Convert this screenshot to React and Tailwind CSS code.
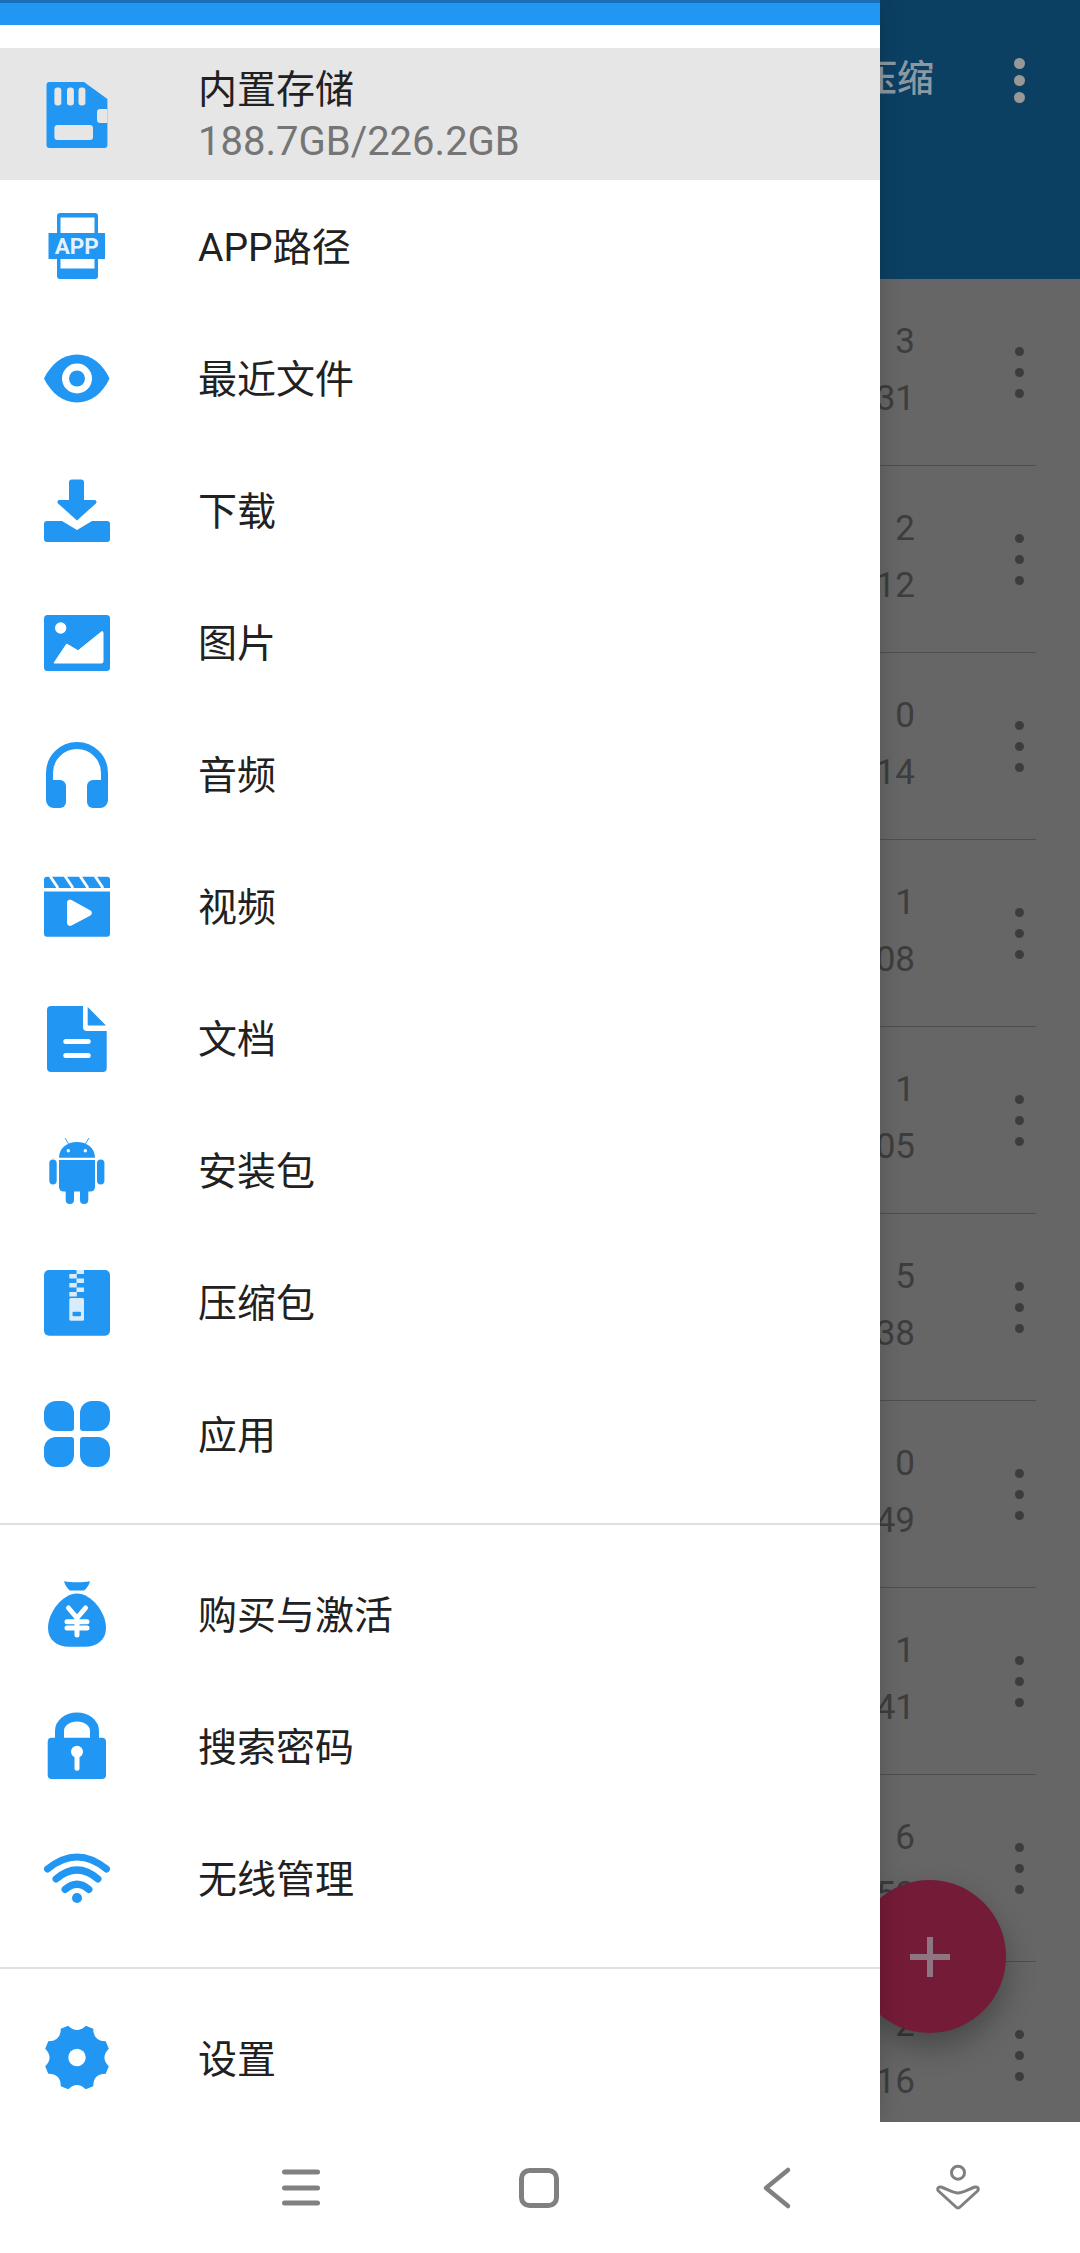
const FONT = "font-['Roboto','Noto_Sans_CJK_SC',sans-serif]";

// 8 tooth gear outline, center 36,35.5
function gearPath() {
  const pt = (deg, r) => {
    const a = (deg * Math.PI) / 180;
    return `${(36 + r * Math.cos(a)).toFixed(2)} ${(35.5 + r * Math.sin(a)).toFixed(2)}`;
  };
  let d = `M${pt(22.5 - 7, 33)}`;
  for (let k = 0; k < 8; k++) {
    const a = 22.5 + 45 * k;
    d += ` L${pt(a + 7, 33)} Q${pt(a + 22.5, 23)} ${pt(a + 38, 33)}`;
  }
  return d + ' Z';
}

function Svg({ children }) {
  return (
    <svg viewBox="0 0 72 72" className="w-[72px] h-[72px] text-[#2196f3]" fill="currentColor">
      {children}
    </svg>
  );
}

const SdIcon = () => (
  <Svg>
    <path d="M5.5 7a3 3 0 0 1 3-3H43l23.4 17v46a3 3 0 0 1-3 3H8.5a3 3 0 0 1-3-3Z" />
    <path d="M59 31h7.4v14H59a3 3 0 0 1-3-3v-8a3 3 0 0 1 3-3Z" fill="#e6e6e6" />
    <g fill="#e6e6e6">
      <rect x="13.4" y="9.5" width="6.9" height="18" rx="3" />
      <rect x="26" y="9.5" width="6.9" height="18" rx="3" />
      <rect x="37.5" y="9.5" width="6.9" height="18" rx="3" />
      <rect x="13.4" y="47" width="38.6" height="15" rx="3" />
    </g>
  </Svg>
);

const AppIcon = () => (
  <Svg>
    <path fillRule="evenodd" d="M19 3h35a3 3 0 0 1 3 3v60a3 3 0 0 1-3 3H19a3 3 0 0 1-3-3V6a3 3 0 0 1 3-3Zm0.500 4.500v51h34v-51Z" />
    <rect x="7.5" y="23" width="56.5" height="26" />
    <circle cx="36" cy="63.5" r="2.2" />
    <text x="35.8" y="43.500" textAnchor="middle" fontSize="22.500" fontWeight="700" fill="#e3f2fd" fontFamily="Roboto, sans-serif">APP</text>
  </Svg>
);

const EyeIcon = () => (
  <Svg>
    <path d="M3 36.5C10 22 22 12.5 36 12.5S62 22 68.5 36.5C62 51 50 60.5 36 60.5S10 51 3 36.5Z" />
    <circle cx="36" cy="36.5" r="15" fill="#fff" />
    <circle cx="36" cy="36.5" r="8" />
  </Svg>
);

const DownloadIcon = () => (
  <Svg>
    <path d="M31 5.5h9a3 3 0 0 1 3 3V26h10.5a2 2 0 0 1 1.4 3.4L36 46.5 17 29.4A2 2 0 0 1 18.4 26H28V8.5a3 3 0 0 1 3-3Z" />
    <path d="M6 47h15l15 9 15-9h15a3 3 0 0 1 3 3v15a3 3 0 0 1-3 3H6a3 3 0 0 1-3-3V50a3 3 0 0 1 3-3Z" />
  </Svg>
);

const ImageIcon = () => (
  <Svg>
    <rect x="3" y="9" width="66" height="56" rx="3.5" />
    <circle cx="19.7" cy="22" r="5.7" fill="#fff" />
    <path d="M13 57 25.7 38 37 44.7 60.7 25.7Q62 25 62 27V55.500q0 1.500-1.500 1.500Z" fill="#fff" stroke="#fff" strokeLinejoin="round" />
  </Svg>
);

const HeadphonesIcon = () => (
  <Svg>
    <path d="M8.500 48V35a27.500 27.500 0 0 1 55 0V48" fill="none" stroke="currentColor" strokeWidth="7" />
    <path d="M5 46a4 4 0 0 1 4-4h10a6 6 0 0 1 6 6v16a6 6 0 0 1-6 6h-6a8 8 0 0 1-8-8Z" />
    <path d="M67 46a4 4 0 0 0-4-4H52a6 6 0 0 0-6 6v16a6 6 0 0 0 6 6h7a8 8 0 0 0 8-8Z" />
  </Svg>
);

const VideoIcon = () => (
  <Svg>
    <path d="M6 6.700h60a3 3 0 0 1 3 3V18H3V9.700a3 3 0 0 1 3-3Z" />
    <path d="M3 21.500h66V63.700a3 3 0 0 1-3 3H6a3 3 0 0 1-3-3Z" />
    <path d="M9 6l8 12M24 6l8 12M39 6l8 12M54 6l8 12" stroke="#fff" strokeWidth="2.800" />
    <path d="M26 32.500a3 3 0 0 1 4.500-2.500L49.500 40.500a3 3 0 0 1 0 5L30.500 55.500A3 3 0 0 1 26 53Z" fill="#fff" />
  </Svg>
);

const DocIcon = () => (
  <Svg>
    <path d="M10 4h32v21a4 4 0 0 0 4 4h19.700v37a4 4 0 0 1-4 4H10a4 4 0 0 1-4-4V8a4 4 0 0 1 4-4Z" />
    <path d="M46.700 5 65 23.500H46.700Z" />
    <rect x="22.300" y="37" width="27.400" height="5" rx="2.500" fill="#fff" />
    <rect x="22.300" y="51" width="27.400" height="5" rx="2.500" fill="#fff" />
  </Svg>
);

const AndroidIcon = () => (
  <Svg>
    <path d="M24 4l4 6.500M48 4l-4 6.500" stroke="currentColor" strokeWidth="0.900" />
    <path d="M18 23.700C18 14 26 8 36 8s18 6 18 15.700Z" />
    <circle cx="27.300" cy="16.700" r="1.700" fill="#fff" />
    <circle cx="44.300" cy="16.700" r="1.700" fill="#fff" />
    <path d="M18 26h36v27a4.500 4.500 0 0 1-4.500 4.500H22.500A4.500 4.500 0 0 1 18 53Z" />
    <rect x="8.300" y="25.600" width="7.400" height="24.800" rx="3.700" />
    <rect x="56" y="25.600" width="7.400" height="24.800" rx="3.700" />
    <rect x="24.700" y="50" width="8.300" height="20" rx="4.100" />
    <rect x="39" y="50" width="8.300" height="20" rx="4.100" />
  </Svg>
);

const ZipIcon = () => (
  <Svg>
    <rect x="3" y="4" width="66" height="65.700" rx="5" />
    <g fill="#d9ecfc">
      <rect x="35.500" y="4" width="7.500" height="4" />
      <rect x="28.300" y="8" width="7.500" height="4.500" />
      <rect x="35.500" y="12.500" width="7.500" height="4.500" />
      <rect x="28.300" y="17" width="7.500" height="4.500" />
      <rect x="35.500" y="21.500" width="7.500" height="4.500" />
      <rect x="28.300" y="26" width="7.500" height="4.500" />
      <rect x="28.300" y="32" width="14.700" height="22.700" rx="1.500" />
    </g>
    <rect x="31.500" y="45.700" width="8.500" height="4.500" rx="1" />
  </Svg>
);

const petal = 'M3 15a12 12 0 0 1 12-12h6a12 12 0 0 1 12 12v15a3 3 0 0 1-3 3H15a12 12 0 0 1-12-12Z';
const AppsIcon = () => (
  <Svg>
    <path d={petal} />
    <path d={petal} transform="rotate(90 36 36)" />
    <path d={petal} transform="rotate(180 36 36)" />
    <path d={petal} transform="rotate(270 36 36)" />
  </Svg>
);

const BagIcon = () => (
  <Svg>
    <path d="M23 3.200C30 4.500 42 4.500 49 3.200Q47.500 9 43 12.500H29Q24.500 9 23 3.200Z" />
    <path d="M36 15.500C50 15.500 65 34 65 50 65 62 56 68.700 44 68.700H28C16 68.700 7 62 7 50 7 34 22 15.500 36 15.500Z" />
    <path d="M27.500 30 36 40 44.500 30M36 40V57M26 43.700H46M26 50H46" fill="none" stroke="#fff" strokeWidth="5" strokeLinecap="round" />
  </Svg>
);

const LockIcon = () => (
  <Svg>
    <path d="M18.500 30V21a17.500 14 0 0 1 35 0v9" fill="none" stroke="currentColor" strokeWidth="9" />
    <rect x="6.700" y="27.700" width="58.300" height="41.300" rx="4" />
    <circle cx="36" cy="41.700" r="6" fill="#fff" />
    <rect x="33.500" y="42" width="5" height="18.700" rx="2.500" fill="#fff" />
  </Svg>
);

const WifiIcon = () => (
  <Svg>
    <g fill="none" stroke="currentColor" strokeWidth="7" strokeLinecap="round">
      <path d="M6.500 27Q36 3 65.500 27" />
      <path d="M15 37Q36 19 57 37" />
      <path d="M24 47.500Q36 37 48 47.500" />
    </g>
    <circle cx="36" cy="56" r="5" />
  </Svg>
);

const GearIcon = () => (
  <Svg>
    <path d={gearPath()} />
    <circle cx="36" cy="35.500" r="8.700" fill="#fff" />
  </Svg>
);

const MAIN = [
  ['APP路径', AppIcon],
  ['最近文件', EyeIcon],
  ['下载', DownloadIcon],
  ['图片', ImageIcon],
  ['音频', HeadphonesIcon],
  ['视频', VideoIcon],
  ['文档', DocIcon],
  ['安装包', AndroidIcon],
  ['压缩包', ZipIcon],
  ['应用', AppsIcon],
];
const EXTRA = [
  ['购买与激活', BagIcon],
  ['搜索密码', LockIcon],
  ['无线管理', WifiIcon],
];
const FILES = [
  ['3', '31'], ['2', '12'], ['0', '14'], ['1', '08'], ['1', '05'],
  ['5', '38'], ['0', '49'], ['1', '41'], ['6', '50'], ['2', '16'],
];

function DrawerRow({ label, Icon }) {
  return (
    <div className="h-[132px] flex items-center pl-[41px]">
      <Icon />
      <span className="ml-[85px] pt-[4px] text-[39px] text-[#212121]">{label}</span>
    </div>
  );
}

function Divider() {
  return <div className="h-[2px] bg-[#e0e0e0] my-[23px]" />;
}

function FileRow({ top, bottom }) {
  return (
    <div className="h-[187px] w-[1036px] border-b border-[#4e4e4e] flex items-center">
      <div className="w-[915px] text-right text-[35px] leading-[57px] text-[#3d3d3d] -mt-[4px]">
        <div>{top}</div>
        <div>{bottom}</div>
      </div>
      <div className="ml-[100px] flex flex-col gap-[12px]">
        <div className="w-[9px] h-[9px] rounded-full bg-[#3c3c3c]" />
        <div className="w-[9px] h-[9px] rounded-full bg-[#3c3c3c]" />
        <div className="w-[9px] h-[9px] rounded-full bg-[#3c3c3c]" />
      </div>
    </div>
  );
}

export default function App() {
  return (
    <div className={`w-[1080px] h-[2253px] flex flex-col bg-white overflow-hidden ${FONT}`}>
      <div className="relative h-[2122px] bg-[#666666] overflow-hidden">
        <div className="h-[279px] bg-[#0b4063]">
          <div className="h-[160px] flex items-center">
            <span className="w-[934px] text-right text-[37px] font-medium text-[#8c98a2]">压缩</span>
            <div className="ml-[80px] flex flex-col gap-[6px]">
              <div className="w-[11px] h-[11px] rounded-full bg-[#989898]" />
              <div className="w-[11px] h-[11px] rounded-full bg-[#989898]" />
              <div className="w-[11px] h-[11px] rounded-full bg-[#989898]" />
            </div>
          </div>
        </div>
        {FILES.map(([top, bottom], i) => (
          <FileRow key={i} top={top} bottom={bottom} />
        ))}

        <div className="absolute left-[853px] top-[1880px] w-[153px] h-[153px] rounded-full bg-[#741b37] shadow-[0_14px_30px_rgba(0,0,0,0.3)] flex items-center justify-center">
          <svg viewBox="0 0 40 40" className="w-[40px] h-[40px] text-[#8d7581]" fill="currentColor">
            <rect x="0" y="17" width="40" height="6" />
            <rect x="17" y="0" width="6" height="40" />
          </svg>
        </div>

        <div className="absolute left-0 top-0 bottom-0 w-[880px] bg-white shadow-[0_0_24px_rgba(0,0,0,0.18)] overflow-hidden">
          <div className="h-[25px] bg-[#2196f3] border-t-[3px] border-[#1a70b8]" />
          <div className="h-[132px] mt-[23px] bg-[#e6e6e6] flex items-center pl-[41px]">
            <SdIcon />
            <div className="ml-[85px] pt-[3px] leading-[52px]">
              <div className="text-[39px] text-[#212121]">内置存储</div>
              <div className="text-[40px] text-[#757575]">188.7GB/226.2GB</div>
            </div>
          </div>
          {MAIN.map(([label, Icon]) => (
            <DrawerRow key={label} label={label} Icon={Icon} />
          ))}
          <Divider />
          {EXTRA.map(([label, Icon]) => (
            <DrawerRow key={label} label={label} Icon={Icon} />
          ))}
          <Divider />
          <DrawerRow label="设置" Icon={GearIcon} />
        </div>
      </div>

      <div className="flex-1 flex items-center pl-[276px] text-[#808080]">
        <svg viewBox="0 0 50 50" className="w-[50px] h-[50px]" fill="currentColor">
          <rect x="6" y="6.500" width="38" height="5" rx="2.500" />
          <rect x="6" y="22.500" width="38" height="5" rx="2.500" />
          <rect x="6" y="37.500" width="38" height="5" rx="2.500" />
        </svg>
        <svg viewBox="0 0 50 50" className="w-[50px] h-[50px] ml-[188px]" fill="none" stroke="currentColor" strokeWidth="5">
          <rect x="7.500" y="7.500" width="35" height="35" rx="8" />
        </svg>
        <svg viewBox="0 0 50 50" className="w-[50px] h-[50px] ml-[188px]" fill="none" stroke="currentColor" strokeWidth="4.500" strokeLinecap="round" strokeLinejoin="round">
          <path d="M36 7 14 25l22 18" />
        </svg>
        <svg viewBox="0 0 50 50" className="w-[50px] h-[50px] ml-[131px]" fill="none" stroke="currentColor" strokeWidth="3" strokeLinejoin="round">
          <circle cx="25" cy="9.700" r="6.500" />
          <path d="M8 24C14 26 20 30 25 30S36 26 42 24C45.500 23.500 46 26 44.500 28L27 44Q25 46 23 44L5.500 28C4 26 4.500 23.500 8 24Z" />
        </svg>
      </div>
    </div>
  );
}
